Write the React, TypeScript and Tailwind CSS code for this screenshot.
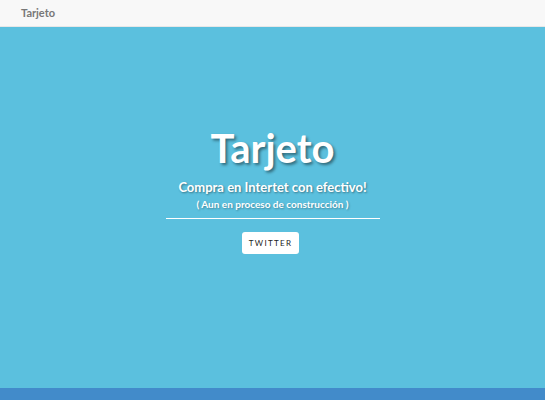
import React from "react";

export default function App() {
  return (
    <div className="flex h-[400px] w-full flex-col bg-[#5bc0de]" style={{ fontFamily: "Lato, 'Noto Sans', sans-serif" }}>
      <div className="flex h-[27px] shrink-0 items-center border-b border-[#e7e7e7] bg-[#f8f8f8] px-[21px]">
        <span className="text-[11px] font-bold text-[#777]">Tarjeto</span>
      </div>
      <div className="flex flex-1 flex-col items-center justify-center pb-[34px]">
        <h1 className="text-[40px] font-bold leading-none text-white [text-shadow:2px_2px_3px_rgba(0,0,0,0.45)]">Tarjeto</h1>
        <div className="mt-[13px] text-[13px] font-bold leading-none text-white [text-shadow:1px_1px_2px_rgba(0,0,0,0.4)]">Compra en Intertet con efectivo!</div>
        <div className="mt-[5px] text-[10px] font-bold leading-none text-white [text-shadow:1px_1px_2px_rgba(0,0,0,0.3)]">( Aun en proceso de construcción )</div>
        <div className="mt-[9px] h-px w-[214px] bg-white"></div>
        <button className="mt-[13px] mr-[4px] flex h-[22px] w-[57px] items-center justify-center rounded-[3px] bg-white text-[8px] font-normal uppercase tracking-[1.3px] text-[#222]">Twitter</button>
      </div>
      <div className="h-[12px] shrink-0 bg-[#428bca]"></div>
    </div>
  );
}
